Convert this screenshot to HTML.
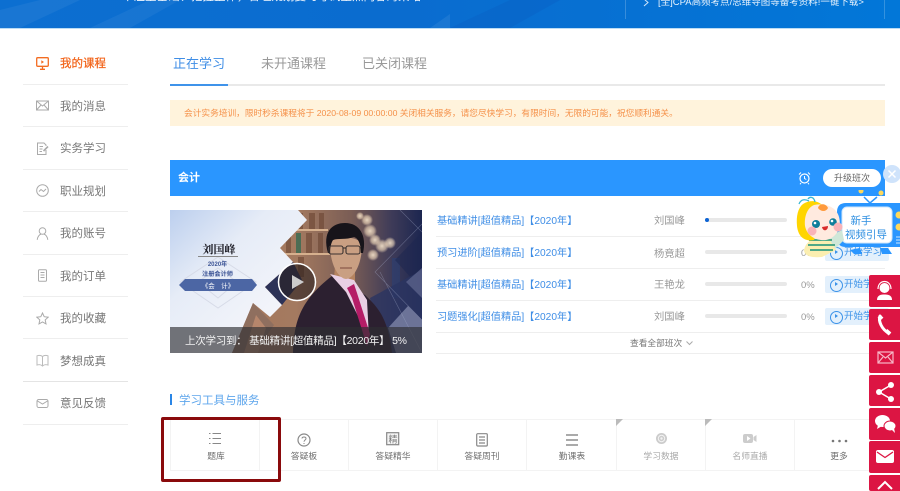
<!DOCTYPE html>
<html lang="zh"><head><meta charset="utf-8"><title>我的课程</title>
<style>
*{margin:0;padding:0;box-sizing:border-box}
html,body{width:900px;height:491px;overflow:hidden;background:#fff}
body{position:relative;font-family:"Liberation Sans","Noto Sans CJK SC",sans-serif;color:#666}
#w{position:absolute;left:0;top:0;width:900px;height:491px;overflow:hidden;filter:blur(.35px)}
.a{position:absolute;white-space:nowrap}
.side{left:60px;font-size:11.5px;line-height:16px;color:#777}
.sl{left:23px;width:105px;height:1px;background:#eee}
.si{position:absolute;left:36px;width:13px;height:13px}
.row{left:437px;font-size:10.2px;line-height:14px;color:#3f8ee6}
.t{left:654px;font-size:10.3px;line-height:14px;color:#999}
.ln{left:436px;width:449px;height:1px;background:#eee}
.bar{left:705px;width:82px;height:4px;border-radius:2px;background:#e8e8e8}
.pc{left:801px;font-size:9.5px;line-height:12px;color:#999}
.btn{left:825px;width:64px;height:17px;background:#e3f0fc;border-radius:2px;font-size:9.5px;line-height:17px;color:#3b92e8;padding-left:19px}
.btn:before{content:"";position:absolute;left:5px;top:3px;width:11px;height:11px;border:1px solid #3b92e8;border-radius:50%}
.btn:after{content:"";position:absolute;left:9.5px;top:6px;border-left:3.5px solid #3b92e8;border-top:2.5px solid transparent;border-bottom:2.5px solid transparent}
.cell{top:419px;height:52px;border:1px solid #f3f3f3;border-left:0}
.lab{top:450px;width:90px;text-align:center;font-size:8.8px;line-height:13px;color:#6e6e6e}
.red{left:869px;width:31px;background:#dc1543;border-radius:2px 0 0 2px}
.red svg{position:absolute;left:0;top:0}
svg{display:block}
</style></head><body><div id="w">

<!-- top banner -->
<div class="a" style="left:0;top:0;width:900px;height:29px;background:linear-gradient(90deg,#0c6fd1 0%,#0a6ccf 45%,#0277d8 100%);border-bottom:1px solid #bcdcf4"></div>
<svg class="a" style="left:0;top:0" width="900" height="28"><g fill="#fff" opacity=".05"><path d="M0 10L40 0H80L20 28H0Z"/><path d="M90 28L150 0H180L130 28Z"/></g><path d="M450 28L510 0H560L510 28Z" fill="#0a5fc4" opacity=".4"/><path d="M430 28L450 14V28Z" fill="#fff" opacity=".07"/><path d="M625.500 0V19M884.500 0V19" stroke="#fff" stroke-opacity=".2"/><path d="M644 -1L648 2.500L644 6" fill="none" stroke="#cfe6fb"/></svg>
<div class="a" style="left:122px;top:-10px;font-size:11.500px;line-height:14px;color:#f2f8ff">丨注重基础、把握整体，合理规划复习考试重点内容的策略</div>
<div class="a" style="left:658px;top:-4px;font-size:9.500px;line-height:13px;color:#e8f3fd">[全]CPA高频考点/思维导图等备考资料!一键下载&gt;</div>

<!-- sidebar -->
<svg class="si" style="top:57px" viewBox="0 0 13 13" fill="none" stroke="#f36c21" stroke-width="1.300"><rect x=".7" y=".7" width="11.600" height="8.600" rx="1"/><path d="M6.500 9.500V12M4 12.300H9"/><path d="M5.300 3.200L8 5L5.300 6.800Z" fill="#f36c21" stroke="none"/></svg>
<div class="a side" style="top:56px;color:#f2641a;-webkit-text-stroke:.25px #f2641a">我的课程</div><div class="a sl" style="top:84px"></div>
<svg class="si" style="top:99px" viewBox="0 0 13 13" fill="none" stroke="#aaa"><rect x=".5" y="2" width="12" height="9"/><path d="M.5 2L6.500 7L12.500 2M.5 11L5 6M12.500 11L8 6"/></svg>
<div class="a side" style="top:99px">我的消息</div><div class="a sl" style="top:126px"></div>
<svg class="si" style="top:142px" viewBox="0 0 13 13" fill="none" stroke="#aaa"><path d="M10 8V12.500H1.500V1H8L10 3V4M3.500 4.500H7M3.500 7H6.500M3.500 9.500H6"/><path d="M7.500 9L12 4.500" stroke-width="1.600"/></svg>
<div class="a side" style="top:141px">实务学习</div><div class="a sl" style="top:169px"></div>
<svg class="si" style="top:184px" viewBox="0 0 13 13" fill="none" stroke="#aaa"><circle cx="6.500" cy="6.500" r="5.800"/><path d="M3 7.500L5 5.500L7.500 7.500L10 5"/></svg>
<div class="a side" style="top:184px">职业规划</div><div class="a sl" style="top:211px"></div>
<svg class="si" style="top:227px" viewBox="0 0 13 13" fill="none" stroke="#aaa"><circle cx="6.500" cy="4" r="3.300"/><path d="M1.200 12.800C1.500 9.500 3.500 7.500 5 7.300M11.800 12.800C11.500 9.500 9.500 7.500 8 7.300"/></svg>
<div class="a side" style="top:226px">我的账号</div><div class="a sl" style="top:254px"></div>
<svg class="si" style="top:269px" viewBox="0 0 13 13" fill="none" stroke="#aaa"><rect x="2.500" y=".7" width="8" height="11.600" rx="1"/><path d="M4.500 3.500H8.500M4.500 6H8.500M4.500 8.500H8.500"/></svg>
<div class="a side" style="top:269px">我的订单</div><div class="a sl" style="top:296px"></div>
<svg class="si" style="top:312px" viewBox="0 0 13 13" fill="none" stroke="#aaa"><path d="M6.500 1L8.200 4.700L12.200 5.200L9.200 7.900L10 11.900L6.500 9.900L3 11.900L3.800 7.900L.8 5.200L4.800 4.700Z"/></svg>
<div class="a side" style="top:311px">我的收藏</div><div class="a sl" style="top:338px"></div>
<svg class="si" style="top:354px" viewBox="0 0 13 13" fill="none" stroke="#bbb"><path d="M6.500 2.500C5 1.300 2.500 1.300 1 1.800V11C2.500 10.500 5 10.500 6.500 12C8 10.500 10.500 10.500 12 11V1.800C10.500 1.300 8 1.300 6.500 2.500ZM6.500 2.500V12"/></svg>
<div class="a side" style="top:354px">梦想成真</div><div class="a sl" style="top:381px;background:#e4e4e4"></div>
<svg class="si" style="top:397px" viewBox="0 0 13 13" fill="none" stroke="#aaa"><rect x="1" y="2.500" width="11" height="8" rx="1.800"/><path d="M1.500 4L6.500 7L11.500 4"/></svg>
<div class="a side" style="top:396px">意见反馈</div><div class="a sl" style="top:424px"></div>

<!-- tabs -->
<div class="a" style="left:173px;top:55px;font-size:13px;line-height:17px;color:#3f8ee6">正在学习</div>
<div class="a" style="left:261px;top:55px;font-size:13px;line-height:17px;color:#999">未开通课程</div>
<div class="a" style="left:362px;top:55px;font-size:13px;line-height:17px;color:#999">已关闭课程</div>
<div class="a" style="left:170px;top:84px;width:715px;height:2px;background:#e9e9e9"></div>
<div class="a" style="left:170px;top:84px;width:58px;height:2px;background:#3f93ea"></div>

<!-- notice -->
<div class="a" style="left:170px;top:100px;width:715px;height:26px;background:#fff3dc"></div>
<div class="a" style="left:184px;top:107px;font-size:8.700px;line-height:13px;color:#f5914a">会计实务培训，限时秒杀课程将于 2020-08-09 00:00:00 关闭相关服务，请您尽快学习，有限时间，无限的可能，祝您顺利通关。</div>

<!-- course header -->
<div class="a" style="left:170px;top:160px;width:715px;height:36px;background:#2a96ff"></div>
<div class="a" style="left:178px;top:171px;font-size:11px;line-height:15px;font-weight:bold;color:#fff">会计</div>
<svg class="a" style="left:798px;top:171px" width="13" height="14" viewBox="0 0 13 14" fill="none" stroke="#fff"><circle cx="6.500" cy="7.500" r="4.500" stroke-width="1.200"/><path d="M6.500 5V7.500L8.300 8.500M1 3.500L3 1.500M12 3.500L10 1.500M3 12L2 13.300M10 12L11 13.300"/></svg>
<div class="a" style="left:823px;top:169px;width:58px;height:18px;border-radius:9px;background:#fff;text-align:center;font-size:9px;line-height:18px;color:#666">升级班次</div>

<!-- thumbnail -->
<svg class="a" style="left:170px;top:210px" width="252" height="143" viewBox="0 0 252 143">
<defs>
<linearGradient id="bg" x1="0" y1="0" x2=".8" y2=".9"><stop offset="0" stop-color="#bccfee"/><stop offset=".4" stop-color="#e6ecf7"/><stop offset="1" stop-color="#f7f7fb"/></linearGradient>
<linearGradient id="r" x1="0" y1="0" x2="1" y2="0"><stop offset="0" stop-color="#a87458"/><stop offset=".5" stop-color="#a47a60"/><stop offset=".72" stop-color="#7a5d55"/><stop offset=".88" stop-color="#3e3b58"/><stop offset="1" stop-color="#1c2650"/></linearGradient>
<radialGradient id="gl" cx=".5" cy=".5" r=".5"><stop offset="0" stop-color="#ffeed4" stop-opacity=".85"/><stop offset=".6" stop-color="#ffe6c4" stop-opacity=".55"/><stop offset="1" stop-color="#ffe6c4" stop-opacity="0"/></radialGradient>
</defs>
<rect width="252" height="143" fill="url(#r)"/>
<g stroke="#d6b08e" stroke-width="2"><path d="M100 20H158M100 44H160"/></g>
<g fill="#6b4532" opacity=".6"><rect x="128" y="3" width="5" height="16"/><rect x="139" y="3" width="6" height="16"/><rect x="149" y="3" width="5" height="16"/><rect x="116" y="23" width="5" height="20"/><rect x="136" y="23" width="6" height="20"/><rect x="148" y="23" width="5" height="20"/><rect x="128" y="47" width="6" height="20"/></g>
<rect x="126" y="23" width="5" height="20" fill="#2f6a50" opacity=".75"/>
<g fill="url(#gl)"><circle cx="197" cy="10" r="6"/><circle cx="200" cy="21" r="7"/><circle cx="205" cy="30" r="6"/><circle cx="212" cy="36" r="7"/><circle cx="220" cy="33" r="6"/><circle cx="203" cy="45" r="6"/><circle cx="190" cy="6" r="4"/></g>
<rect x="222" y="48" width="8" height="40" fill="#2b3f73" opacity=".6"/>
<path d="M225 50L252 22V80Z" fill="#1d2650" opacity=".55"/>
<path d="M200 88L252 60V143H210Z" fill="#2a3562" opacity=".8"/>
<path d="M218 118L238 96L252 110V143H226Z" fill="#838aab" opacity=".75"/>
<path d="M236 72L252 58V88Z" fill="#6a7299" opacity=".6"/>
<g stroke="#aab2cf" stroke-width=".6" opacity=".4" fill="none"><path d="M252 14L205 62L252 110M230 0L252 22M210 62L252 143"/></g>
<path d="M0 0H128L137 10L110 38L123 52L95 77L112 95L100 107L83 93L62 143H0Z" fill="url(#bg)"/>
<path d="M95 77L123 52L132 70L112 95Z" fill="#2c3257"/>
<path d="M62 143L83 93L104 115L84 143Z" fill="#8f6f5f"/>
<path d="M74 143L86 105L96 118L88 143Z" fill="#b6866c"/>
<g fill="none" stroke="#d5d9e6" opacity=".9"><path d="M48 47L86 72L48 98L10 72Z"/><path d="M48 58L67 72L48 88L28 72Z"/></g>
<text x="49" y="43" text-anchor="middle" font-family="Noto Serif CJK SC,serif" font-size="11" font-weight="bold" fill="#1b1b24">刘国峰</text>
<path d="M28 46.500H68" stroke="#888"/>
<text x="47.500" y="56" text-anchor="middle" font-size="6" font-weight="bold" fill="#3d5596">2020年</text>
<text x="47.500" y="66" text-anchor="middle" font-size="6.200" font-weight="bold" fill="#3d5596">注册会计师</text>
<path d="M9 75L15 69H82L87 75L82 81H15Z" fill="#4c66a4"/>
<text x="48" y="78" text-anchor="middle" font-size="6.500" fill="#fff">《会　计》</text>
<!-- person -->
<path d="M123 143C124 115 128 92 162 66L195 85C205 95 218 105 222 143Z" fill="#2c2030"/>
<path d="M165 56H185V72L176 82L164 68Z" fill="#b5835f"/>
<path d="M160 64L176 82L199 128L197 90L184 70Z" fill="#e8cfe4"/>
<path d="M177 78L184 74L187 83L200 124L197 136L182 88Z" fill="#b51d67"/>
<path d="M160 35C160 25 190 25 192 35C192 52 185 68 176 69C167 68 160 52 160 35Z" fill="#c99f82"/>
<path d="M158 43C152 22 162 13 175 13C190 13 197 26 193 43L191 43C191 34 188 28 184 27C176 30 168 28 163 30C161 33 160 38 160 43Z" fill="#17141a"/>
<g fill="none" stroke="#3a3230" stroke-width="1.100"><rect x="159" y="36" width="14" height="8" rx="2"/><rect x="176" y="36" width="14" height="8" rx="2"/><path d="M173 38H176"/></g>
<path d="M170 58H182" stroke="#7c4a3c"/>
<!-- overlay -->
<rect y="117" width="252" height="26" fill="#2e2e32" opacity=".65"/>
<circle cx="127" cy="72" r="18.500" fill="#2a2020" fill-opacity=".6" stroke="#fff" stroke-width="1.500"/>
<path d="M122 65L134 72L122 79Z" fill="#ccc"/>
<text x="15" y="134" font-size="10.500" fill="#f3f3f3" textLength="222" lengthAdjust="spacing">上次学习到： 基础精讲[超值精品]【2020年】 5%</text>
</svg>

<!-- rows -->
<div class="a row" style="top:215px">基础精讲[超值精品]【2020年】</div>
<div class="a row" style="top:247px">预习进阶[超值精品]【2020年】</div>
<div class="a row" style="top:279px">基础精讲[超值精品]【2020年】</div>
<div class="a row" style="top:311px">习题强化[超值精品]【2020年】</div>
<div class="a t" style="top:215px">刘国峰</div>
<div class="a t" style="top:248px">杨竟超</div>
<div class="a t" style="top:279px">王艳龙</div>
<div class="a t" style="top:311px">刘国峰</div>
<div class="a ln" style="top:236px"></div><div class="a ln" style="top:268px"></div><div class="a ln" style="top:300px"></div><div class="a ln" style="top:332px"></div><div class="a ln" style="top:353px"></div>
<div class="a bar" style="top:218px"></div><div class="a" style="left:705px;top:218px;width:4px;height:4px;border-radius:2px;background:#0c63d4"></div>
<div class="a bar" style="top:250px"></div><div class="a bar" style="top:282px"></div><div class="a bar" style="top:314px"></div>
<div class="a pc" style="top:248px">0%</div><div class="a pc" style="top:280px">0%</div><div class="a pc" style="top:312px">0%</div>
<div class="a btn" style="top:244px">开始学习</div><div class="a btn" style="top:276px">开始学习</div><div class="a btn" style="top:308px">开始学习</div>
<div class="a" style="left:630px;top:337px;font-size:8.700px;line-height:13px;color:#777">查看全部班次</div>
<svg class="a" style="left:686px;top:341px" width="7" height="5"><path d="M.5 .5L3.500 3.500L6.500 .5" fill="none" stroke="#aaa"/></svg>

<!-- tools -->
<div class="a" style="left:170px;top:394px;width:2px;height:11px;background:#2a86e6"></div>
<div class="a" style="left:179px;top:393px;font-size:11.500px;line-height:16px;color:#5ea6ec">学习工具与服务</div>
<div class="a cell" style="left:170px;width:90px;border-left:1px solid #f3f3f3"></div>
<div class="a cell" style="left:260px;width:89px"></div>
<div class="a cell" style="left:349px;width:89px"></div>
<div class="a cell" style="left:438px;width:89px"></div>
<div class="a cell" style="left:527px;width:90px"></div>
<div class="a cell" style="left:617px;width:89px"></div>
<div class="a cell" style="left:706px;width:89px"></div>
<div class="a cell" style="left:795px;width:90px;border-right:0"></div>
<svg class="a" style="left:616px;top:419px" width="180" height="8"><path d="M0 0H7L0 7ZM89 0H96L89 7Z" fill="#bbb"/></svg>

<svg class="a" style="left:208px;top:432px" width="14" height="13" fill="none" stroke="#888"><path d="M1 1.500H2.500M1 6.500H2.500M1 11.500H2.500M4.500 1.500H13M4.500 6.500H13M4.500 11.500H13"/></svg>
<svg class="a" style="left:297px;top:433px" width="14" height="14" fill="none" stroke="#888"><circle cx="7" cy="7" r="6" stroke-width="1.200"/><path d="M5 5.500C5 3.500 9 3.500 9 5.500C9 7 7 7 7 8.800"/><path d="M7 10V11"/></svg>
<svg class="a" style="left:386px;top:432px" width="14" height="14"><rect x=".7" y=".7" width="12" height="12" fill="#f4f4f4" stroke="#888" stroke-width="1.200"/><text x="7" y="10.500" font-size="9" text-anchor="middle" fill="#777">精</text></svg>
<svg class="a" style="left:476px;top:433px" width="12" height="14" fill="none" stroke="#888" stroke-width="1.200"><rect x=".7" y=".7" width="10.600" height="12.300" rx="1"/><path d="M3 4H9M3 7H9M3 10H9"/></svg>
<svg class="a" style="left:565px;top:434px" width="14" height="12" fill="none" stroke="#777" stroke-width="1.200"><path d="M1 1H13M1 6H13M1 11H13"/></svg>
<svg class="a" style="left:655px;top:432px" width="13" height="13"><circle cx="6.500" cy="6.500" r="5.500" fill="#ccc"/><circle cx="6.500" cy="6.500" r="3.200" fill="none" stroke="#f3f3f3"/><circle cx="6.500" cy="6.500" r="1.200" fill="#f3f3f3"/></svg>
<svg class="a" style="left:743px;top:433px" width="14" height="11"><rect y="1" width="10" height="9" rx="2" fill="#ccc"/><path d="M4 3L7.500 5.500L4 8Z" fill="#fff"/><path d="M10.500 4L13.500 2V9L10.500 7Z" fill="#ccc"/></svg>
<svg class="a" style="left:831px;top:439px" width="17" height="4" fill="#777"><circle cx="2" cy="2" r="1.300"/><circle cx="8.500" cy="2" r="1.300"/><circle cx="15" cy="2" r="1.300"/></svg>

<div class="a lab" style="left:171px">题库</div>
<div class="a lab" style="left:259px">答疑板</div>
<div class="a lab" style="left:348px">答疑精华</div>
<div class="a lab" style="left:437px">答疑周刊</div>
<div class="a lab" style="left:527px">勤课表</div>
<div class="a lab" style="left:616px;color:#aaa">学习数据</div>
<div class="a lab" style="left:705px;color:#aaa">名师直播</div>
<div class="a lab" style="left:794px">更多</div>

<div class="a" style="left:161px;top:417px;width:120px;height:65px;border:3px solid #8a0a0c;border-radius:2px"></div>

<!-- mascot and bubble -->
<svg class="a" style="left:790px;top:190px" width="110" height="75" viewBox="0 0 110 75">
<path d="M74 7L80 13L87 7" fill="none" stroke="#2a96ff" stroke-width="1.500"/>
<circle cx="71" cy="1" r="2.500" fill="#ffd85a"/><circle cx="91" cy="3" r="2.500" fill="#ffd85a"/>
<path d="M60 60L64 64H72L70 58ZM90 58L92 64H102L98 58Z" fill="#2a96ff"/>
<path d="M56 13H110V57H56C50 57 47 54 47 48V22C47 16 50 13 56 13Z" fill="#2a96ff"/>
<rect x="52" y="17" width="50" height="36" rx="5" fill="#fff" stroke="#cfe6fb"/>
<text x="71" y="34" font-size="10.500" fill="#2b8de0" text-anchor="middle">新手</text>
<text x="76" y="48" font-size="10.500" fill="#2b8de0" text-anchor="middle">视频引导</text>
<circle cx="109" cy="25" r="3.500" fill="#ffd85a"/><circle cx="109" cy="37" r="3.500" fill="#ffd85a"/>
<path d="M106 47H110M106 50H110M106 53H110" stroke="#cfe6fb"/>
<path d="M38 47L52 40L54 50L44 60Z" fill="#cfe7d8"/>
<path d="M14 60C16 50 26 46 38 47L46 60L32 67C22 68 14 66 14 60Z" fill="#fbeeb0"/>
<path d="M19 50L42 50M18 55L45 55M20 60L43 60" stroke="#4fa887" stroke-width="2"/>
<path d="M13 14C22 8 34 12 36 22L24 50C14 52 8 46 7 36C6 26 8 18 13 14Z" fill="#ffd500"/>
<path d="M24 15C34 13 46 16 49 27C52 38 46 48 36 50C26 51 17 46 15 36C14 27 17 18 24 15Z" fill="#ffeadf"/>
<path d="M28 18C29 13 36 13 38 18C36 22 31 22 28 18Z" fill="#ff9a3c"/>
<circle cx="26" cy="34" r="4" fill="#0f7e9b"/><circle cx="43" cy="32" r="3.800" fill="#0f7e9b"/><circle cx="25" cy="33" r="1.300" fill="#fff"/><circle cx="42" cy="31" r="1.300" fill="#fff"/>
<circle cx="22" cy="41" r="4.500" fill="#f9b3b8"/><circle cx="48" cy="37" r="4.500" fill="#f9b3b8"/>
<path d="M32 37C33 42 38 41 38 36Z" fill="#d92b2b"/>
<path d="M9 14C11 9 15 9 19 11M18 9C20 6 24 7 25 12" fill="none" stroke="#3ab7d4" stroke-width="1.300"/>
</svg>
<div class="a" style="left:883px;top:165px;width:18px;height:18px;border-radius:50%;background:#cfe3fb"></div>
<svg class="a" style="left:883px;top:165px" width="18" height="18" fill="none" stroke="#fff" stroke-width="1.500"><path d="M5.500 5.500L12.500 12.500M12.500 5.500L5.500 12.500"/></svg>

<!-- red side buttons -->
<div class="a red" style="top:275px;height:32px"><svg width="31" height="32" fill="#fff"><circle cx="15.500" cy="13" r="5"/><path d="M8 25C8 20 12 19.500 15.500 19.500S23 20 23 25Z"/><path d="M9 14C9 4 22 4 22 14" fill="none" stroke="#fff" stroke-width="1.200"/></svg></div>
<div class="a red" style="top:309px;height:31px"><svg width="31" height="31" fill="none" stroke="#fff" stroke-width="3"><path d="M11 7C9 12 13 21 20 24" stroke-linecap="round"/><path d="M10 7L13 10M17 21.500L21 25" stroke-width="4"/></svg></div>
<div class="a red" style="top:342px;height:31px"><svg width="31" height="31" fill="none" stroke="#f7b8c8" stroke-width="1.200"><rect x="9" y="10" width="15" height="11"/><path d="M9 10L16.500 16L24 10M9 21L14 15M24 21L19 15"/></svg></div>
<div class="a red" style="top:375px;height:31px"><svg width="31" height="31" fill="#fff"><circle cx="22" cy="10" r="3"/><circle cx="10" cy="17" r="3"/><circle cx="22" cy="24" r="3"/><path d="M22 10L10 17L22 24" fill="none" stroke="#fff" stroke-width="1.500"/></svg></div>
<div class="a red" style="top:408px;height:32px"><svg width="31" height="32" fill="#fff"><ellipse cx="13.500" cy="13" rx="7.500" ry="6"/><path d="M9 17L8 21L13 18Z"/><ellipse cx="21" cy="18" rx="6" ry="5" stroke="#dc1543"/><path d="M23 22L26 25L25 20Z"/></svg></div>
<div class="a red" style="top:441px;height:32px"><svg width="31" height="32"><rect x="7" y="9" width="18" height="13" rx="2" fill="#fff"/><path d="M8 11L16 16.500L24 11" fill="none" stroke="#dc1543" stroke-width="1.300"/></svg></div>
<div class="a red" style="top:475px;height:16px"><svg width="31" height="16" fill="none" stroke="#fff" stroke-width="2"><path d="M9 14L16 7L23 14"/></svg></div>

</div></body></html>
